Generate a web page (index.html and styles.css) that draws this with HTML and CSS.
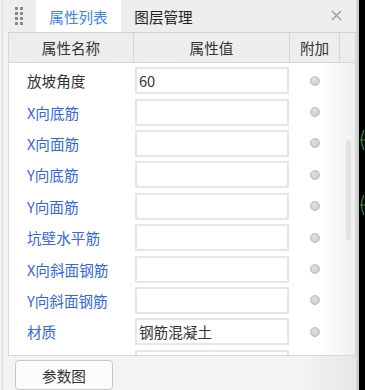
FILE: index.html
```html
<!DOCTYPE html>
<html lang="zh-CN">

<head>
    <meta charset="UTF-8">
    <meta name="viewport" content="width=device-width, initial-scale=1.0">
    <title>属性列表</title>
    <link rel="stylesheet" href="styles.css">
</head>

<body>
    <div class="panel">
        <div class="tabbar">
            <svg class="grip" width="10" height="20" viewBox="0 0 10 20">
                <rect x="1" y="2" width="3" height="3" fill="#8a8a8a" />
                <rect x="6" y="2" width="3" height="3" fill="#8a8a8a" />
                <rect x="1" y="7" width="3" height="3" fill="#8a8a8a" />
                <rect x="6" y="7" width="3" height="3" fill="#8a8a8a" />
                <rect x="1" y="12" width="3" height="3" fill="#8a8a8a" />
                <rect x="6" y="12" width="3" height="3" fill="#8a8a8a" />
                <rect x="1" y="17" width="3" height="3" fill="#8a8a8a" />
                <rect x="6" y="17" width="3" height="3" fill="#8a8a8a" />
            </svg>
            <div class="tab active">属性列表</div>
            <div class="tab">图层管理</div>
            <svg class="close" width="11" height="11" viewBox="0 0 11 11">
                <path d="M1 1 L10 10 M10 1 L1 10" stroke="#9a9a9a" stroke-width="1.3" />
            </svg>
        </div>

        <div class="table">
            <div class="thead">
                <div class="th">属性名称</div>
                <div class="th">属性值</div>
                <div class="th">附加</div>
            </div>
            <div class="tbody">
                <div class="rows" id="rows"></div>
                <div class="thumb"></div>
            </div>
        </div>

        <div class="footer">
            <button class="btn">参数图</button>
        </div>
    </div>
    <div class="edge"></div>
    <div class="canvas">
        <svg width="6" height="390" viewBox="0 0 6 390">
            <path d="M5 130 Q0 140 5 150 M1 140 L6 140" stroke="#1fa51f" stroke-width="1.2" fill="none" />
            <path d="M5 195 Q0 205 5 215 M1 205 L6 205" stroke="#1fa51f" stroke-width="1.2" fill="none" />
        </svg>
    </div>

    <script>
        const props = [
            { name: "放坡角度", value: "60", link: false },
            { name: "X向底筋", value: "", link: true },
            { name: "X向面筋", value: "", link: true },
            { name: "Y向底筋", value: "", link: true },
            { name: "Y向面筋", value: "", link: true },
            { name: "坑壁水平筋", value: "", link: true },
            { name: "X向斜面钢筋", value: "", link: true },
            { name: "Y向斜面钢筋", value: "", link: true },
            { name: "材质", value: "钢筋混凝土", link: true },
            { name: "混凝土类型", value: "预拌混凝土", link: true }
        ];

        const rows = document.getElementById("rows");
        rows.innerHTML = props.map(p => `
            <div class="row">
                <div class="name${p.link ? " link" : ""}">${p.name}</div>
                <div class="value"><div class="input">${p.value}</div></div>
                <div class="extra"><span class="radio"></span></div>
            </div>`).join("");
    </script>
</body>

</html>
```

FILE: styles.css
```css
* {
    box-sizing: border-box;
}

body {
    margin: 0;
    width: 365px;
    height: 390px;
    overflow: hidden;
    display: flex;
    background: #f0f0f0;
    font-family: "Noto Sans CJK SC", "Noto Sans", sans-serif;
    color: #333;
}

.panel {
    width: 355px;
    margin-left: 2px;
    border-left: 1px solid #dcdcdc;
    display: flex;
    flex-direction: column;
    background: linear-gradient(to right, #f3f3f3 85%, #e6e6e6);
}

.tabbar {
    height: 33px;
    display: flex;
    align-items: stretch;
    background: #eeeeee;
    position: relative;
}

.grip {
    margin: 5px 0 0 11px;
    width: 10px;
    height: 20px;
}

.tab {
    width: 85px;
    display: flex;
    align-items: center;
    justify-content: center;
    font-size: 14.6px;
    color: #222;
}

.tab.active {
    margin-left: 12px;
    background: #fff;
    color: #3d82f2;
}

.close {
    margin: 10px 0 0 auto;
    margin-right: 14px;
}

.table {
    margin-left: 5px;
    width: 348px;
    height: 324px;
    border: 1px solid #d6d6d6;
    border-top-color: #d0d0d0;
    display: flex;
    flex-direction: column;
    background: #fff;
}

.thead {
    height: 30px;
    display: grid;
    grid-template-columns: 125px 156px 50px 1fr;
    background: #ededed;
    border-bottom: 1px solid #d6d6d6;
}

.th {
    display: flex;
    align-items: center;
    justify-content: center;
    font-size: 14.6px;
    color: #333;
    border-right: 1px solid #d6d6d6;
}

.tbody {
    flex: 1;
    position: relative;
    overflow: hidden;
    background: linear-gradient(to right, #fff 90%, #efefef);
}

.rows {
    padding-top: 2px;
}

.row {
    height: 31.4px;
    display: grid;
    grid-template-columns: 125px 156px 50px;
    align-items: center;
}

.name {
    padding-left: 18px;
    font-size: 14.6px;
    color: #333;
}

.name.link {
    color: #3366e8;
}

.value {
    padding-left: 1px;
}

.input {
    width: 154px;
    height: 27px;
    border: 2px solid #e6e6e6;
    padding-left: 2px;
    font-size: 14.6px;
    line-height: 23px;
    color: #333;
}

.extra {
    display: flex;
    justify-content: center;
}

.radio {
    width: 10px;
    height: 10px;
    border-radius: 50%;
    background: radial-gradient(circle at 40% 35%, #e2e2e2, #c4c4c4);
    border: 1px solid #bdbdbd;
}

.thumb {
    position: absolute;
    left: 337px;
    top: 77px;
    width: 5px;
    height: 100px;
    border-radius: 3px;
    background: #e2e2e2;
}

.footer {
    flex: 1;
    padding: 4px 0 0 12px;
}

.btn {
    width: 98px;
    height: 30px;
    border: 1px solid #c8c8c8;
    border-radius: 4px;
    background: #fcfcfc;
    font-family: inherit;
    font-size: 14.6px;
    color: #333;
    padding: 0;
}

.edge {
    width: 5px;
    background: linear-gradient(to right, #dcdcdc, #c0c0c0);
}

.canvas {
    flex: 1;
    background: #000;
}
```
